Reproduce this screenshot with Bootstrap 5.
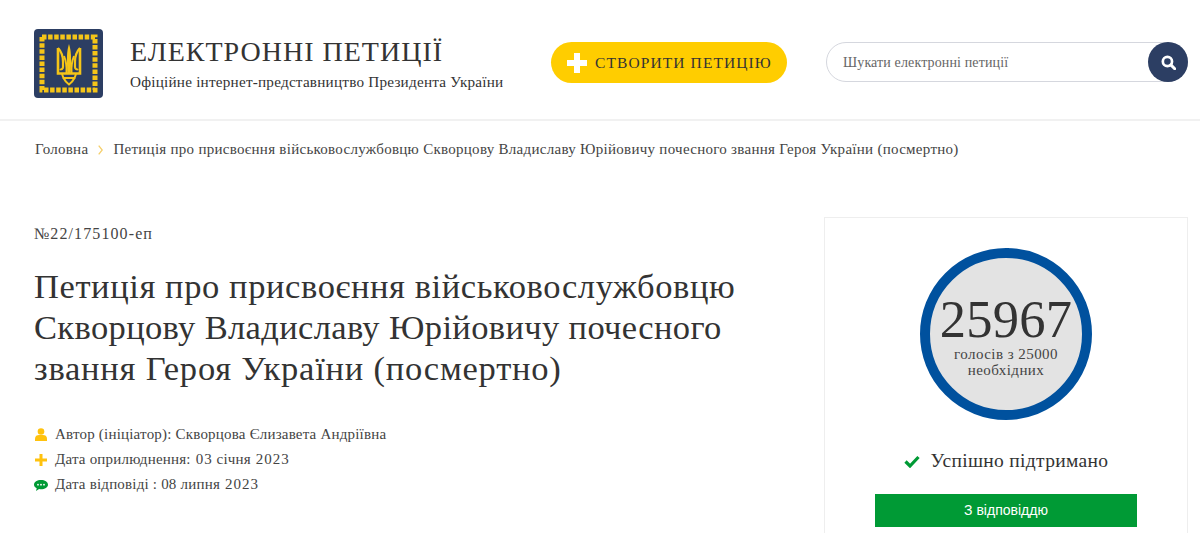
<!DOCTYPE html>
<html lang="uk">
<head>
    <meta charset="UTF-8">
    <meta name="viewport" content="width=device-width, initial-scale=1.0">
    <title>Електронні петиції</title>
    <link href="https://cdn.jsdelivr.net/npm/bootstrap@5.3.3/dist/css/bootstrap.min.css" rel="stylesheet">
    <style>
        body {
            font-family: "Liberation Serif", serif;
            color: #333;
            height: 533px;
            overflow: hidden;
        }
        .site-head {
            height: 121px;
            border-bottom: 2px solid #f1f1f1;
            padding: 29px 12px 0 34px;
        }
        .logo-box { width: 69px; height: 69px; flex: none; }
        .brand-text { margin-left: 27px; width: 421px; flex: none; }
        .brand-title { font-size: 28px; line-height: 32px; letter-spacing: 1px; margin-top: 7px; color: #333; }
        .brand-sub { font-size: 15.2px; line-height: 20px; margin-top: 4px; color: #333; letter-spacing: .22px; }
        .create-btn {
            width: 236px; height: 41px; margin-top: 13px;
            background: #ffcd00; border-radius: 21px; border: 0;
            font-size: 15.5px; letter-spacing: 1.1px; color: #333;
            padding: 0 0 0 16px;
        }
        .create-btn:hover { background: #ffcd00; color: #333; }
        .search-box {
            width: 362px; height: 40px; margin: 13px 0 0 39px;
            border: 1px solid #d5d7de; border-radius: 20px;
        }
        .search-box input {
            border: 0; outline: 0; background: none; flex: 1; padding: 0 0 0 16px;
            font-family: inherit; font-size: 14px; letter-spacing: .13px; color: #555;
        }
        .search-box input::placeholder { color: #666; opacity: 1; }
        .search-round {
            width: 40px; height: 40px; margin: -1px -1px -1px 0; flex: none;
            background: #2c3e63; border-radius: 50%; border: 0; padding: 0;
        }
        .crumbs { padding: 19px 0 0 35px; font-size: 15px; line-height: 18px; letter-spacing: .28px; color: #444; }
        .crumbs svg { margin: 0 10px 0 10px; vertical-align: -1px; }
        .page-main { padding: 0 11px 0 34px; margin-top: 59px; }
        .left-part { width: 790px; flex: none; }
        .pet-num { font-size: 16px; line-height: 20px; margin-top: 7px; color: #444; letter-spacing: 1.1px; }
        .pet-title { font-family: "Liberation Serif", serif; font-size: 34.5px; line-height: 41px; font-weight: 400; margin: 22px 0 0; color: #333; letter-spacing: .6px; }
        .title-tight { letter-spacing: .36px; }
        .title-wide { letter-spacing: .78px; }
        .meta-list { margin-top: 33px; font-size: 15px; color: #444; letter-spacing: .2px; }
        .meta-list div { height: 25px; line-height: 25px; }
        .meta-list b { font-weight: 400; letter-spacing: 1px; margin-left: 1px; }
        .meta-ic { width: 14px; height: 14px; margin-right: 7px; flex: none; }
        .vote-panel { width: 364px; height: 330px; border: 1px solid #eeeeee; flex: none; border-bottom: 0; }
        .vote-ring {
            width: 172px; height: 172px; margin: 30px auto 0;
            border: 10px solid #00519e; border-radius: 50%; background: #e3e3e3;
            text-align: center; padding-top: 38px;
        }
        .vote-big { font-size: 52.5px; line-height: 47px; color: #333; letter-spacing: .3px; }
        .vote-small { font-size: 15px; line-height: 15.5px; color: #444; margin-top: 4px; letter-spacing: .45px; }
        .vote-state { margin-top: 28px; font-size: 19.5px; line-height: 26px; color: #333; letter-spacing: .33px; }
        .vote-state svg { margin-right: 11px; }
        .answer-bar {
            width: 262px; height: 33px; margin: 20px auto 0; background: #009a35; color: #fff;
            font-family: "Liberation Sans", sans-serif; font-size: 14px; line-height: 33px; text-align: center;
        }
    </style>
</head>
<body>
    <header class="site-head d-flex">
        <svg class="logo-box" viewBox="0 0 69 69">
            <rect width="69" height="69" rx="4" fill="#2c3e63"/>
            <rect x="8" y="8" width="53" height="53" fill="none" stroke="#f5c518" stroke-width="5" stroke-dasharray="4.500 1.600"/>
            <path d="M35 15c-2.300 7-2.500 15-1.500 30h3c1-15 .8-23-1.500-30z" fill="#f5c518"/>
            <g fill="none" stroke="#f5c518">
                <path d="M24 19v25.500h22V19" stroke-width="2.600"/>
                <path d="M24 19c4 4 5 8 5 14v5c0 2-2 3-3 2M46 19c-4 4-5 8-5 14v5c0 2 2 3 3 2" stroke-width="2.200"/>
                <path d="M30 27c2 5 3 10 2.500 17M40 27c-2 5-3 10-2.500 17" stroke-width="2"/>
                <path d="M28 45l1.500 4c1.500 3 3.500 5 5.500 6.500 2-1.500 4-3.500 5.500-6.500l1.500-4M28.500 49h13" stroke-width="2"/>
            </g>
        </svg>
        <div class="brand-text">
            <div class="brand-title">ЕЛЕКТРОННІ ПЕТИЦІЇ</div>
            <div class="brand-sub">Офіційне інтернет-представництво Президента України</div>
        </div>
        <button class="btn create-btn d-flex align-items-center">
            <svg width="20" height="20" viewBox="0 0 20 20" class="me-2 flex-shrink-0"><path d="M7 0h6v7h7v6h-7v7H7v-7H0V7h7z" fill="#fff"/></svg>
            <span>СТВОРИТИ ПЕТИЦІЮ</span>
        </button>
        <form class="search-box d-flex align-items-center">
            <input type="text" placeholder="Шукати електронні петиції">
            <button type="button" class="search-round d-flex align-items-center justify-content-center">
                <svg width="15" height="15" viewBox="0 0 14 14"><circle cx="6" cy="6" r="4.300" fill="none" stroke="#fff" stroke-width="2.500"/><path d="M9.200 9.200l3.600 3.600" stroke="#fff" stroke-width="2.800" stroke-linecap="round"/></svg>
            </button>
        </form>
    </header>

    <nav class="crumbs">Головна<svg width="5" height="10" viewBox="0 0 5 10"><path d="M.7 .7L4.200 5 .7 9.300" fill="none" stroke="#f5cf6b" stroke-width="1.300"/></svg>Петиція про присвоєння військовослужбовцю Скворцову Владиславу Юрійовичу почесного звання Героя України (посмертно)</nav>

    <main class="page-main d-flex">
        <section class="left-part">
            <div class="pet-num">№22/175100-еп</div>
            <h1 class="pet-title">Петиція про присвоєння військовослужбовцю<br><span class="title-tight">Скворцову Владиславу Юрійовичу почесного</span><br><span class="title-wide">звання Героя України (посмертно)</span></h1>
            <div class="meta-list">
                <div class="d-flex align-items-center">
                    <svg class="meta-ic" viewBox="0 0 14 14"><circle cx="7" cy="3.500" r="3.300" fill="#ffc20e"/><path d="M1 13v-2.500C1 8 3 7 5 7h4c2 0 4 1 4 3.500V13z" fill="#ffc20e"/></svg>
                    <span>Автор (ініціатор): Скворцова Єлизавета Андріївна</span>
                </div>
                <div class="d-flex align-items-center">
                    <svg class="meta-ic" viewBox="0 0 14 14"><path d="M5.500 1h3v4.500H13v3H8.500V13h-3V8.500H1v-3h4.500z" fill="#ffc20e"/></svg>
                    <span>Дата оприлюднення: <b>03</b> січня <b>2023</b></span>
                </div>
                <div class="d-flex align-items-center">
                    <svg class="meta-ic" viewBox="0 0 14 14"><path d="M7 2c3.800 0 7 2.100 7 4.700s-3.200 4.600-7 4.600c-.7 0-1.300 0-1.900-.2L2 13l.7-2.800C1 9.400 0 8.100 0 6.700 0 4.100 3.200 2 7 2z" fill="#009a35"/><circle cx="4" cy="6.700" r=".9" fill="#fff"/><circle cx="7" cy="6.700" r=".9" fill="#fff"/><circle cx="10" cy="6.700" r=".9" fill="#fff"/></svg>
                    <span>Дата відповіді : 08 липня <b>2023</b></span>
                </div>
            </div>
        </section>
        <aside class="vote-panel">
            <div class="vote-ring">
                <div class="vote-big">25967</div>
                <div class="vote-small">голосів з 25000<br>необхідних</div>
            </div>
            <div class="vote-state d-flex align-items-center justify-content-center">
                <svg width="16" height="13" viewBox="0 0 16 13"><path d="M1.500 6.500l4.500 4.500 8.500-9" fill="none" stroke="#009a35" stroke-width="3.200"/></svg>
                Успішно підтримано
            </div>
            <div class="answer-bar">З відповіддю</div>
        </aside>
    </main>
</body>
</html>
